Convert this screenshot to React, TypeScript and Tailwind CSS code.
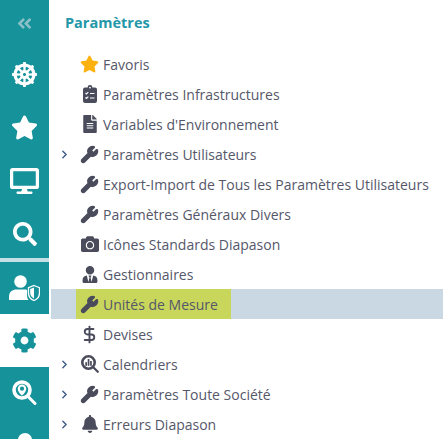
import type { ReactNode } from "react";
import {
  FaAngleDoubleLeft,
  FaBell,
  FaCamera,
  FaCog,
  FaDesktop,
  FaDharmachakra,
  FaFileAlt,
  FaSearch,
  FaStar,
  FaUserTie,
} from "react-icons/fa";
import { ChevronRight, DollarSign, Wrench } from "lucide-react";

// glass with small bars inside, no exact match in the pack
function SearchChart({ className }: { className?: string }) {
  return (
    <svg viewBox="0 0 18 18" className={className} fill="currentColor">
      <circle cx="7.5" cy="7.5" r="6.2" fill="none" stroke="currentColor" strokeWidth="2.6" />
      <rect x="4.3" y="7.2" width="1.7" height="3.6" />
      <rect x="6.7" y="4" width="1.7" height="6.8" />
      <rect x="9.1" y="6" width="1.7" height="4.8" />
      <path d="M12 12l4.8 4.8" stroke="currentColor" strokeWidth="2.2" strokeLinecap="round" />
    </svg>
  );
}

function ClipboardChecks({ className }: { className?: string }) {
  return (
    <svg viewBox="0 0 14 18" className={className} fill="currentColor">
      <path d="M2 2.5h2.6a2.4 2.4 0 0 1 4.8 0H12a2 2 0 0 1 2 2V16a2 2 0 0 1-2 2H2a2 2 0 0 1-2-2V4.500a2 2 0 0 1 2-2z" />
      <circle cx="7" cy="2.600" r="0.9" fill="#fff" />
      <path d="M2.500 8l1 1 1.800-1.800M2.500 12.500l1 1 1.800-1.800M7 8.500h4.500M7 13h4.500" fill="none" stroke="#fff" strokeWidth="1.100" />
    </svg>
  );
}

function LocationGlass({ className }: { className?: string }) {
  return (
    <svg viewBox="0 0 25 26" className={className}>
      <circle cx="10" cy="10" r="8" fill="none" stroke="#fff" strokeWidth="3.600" />
      <path d="M10 4.500a4.300 4.300 0 0 1 4.300 4.300c0 2.600-3 5.700-4.300 6.900-1.300-1.200-4.300-4.300-4.300-6.900A4.300 4.300 0 0 1 10 4.500z" fill="#fff" />
      <path d="M10 6.600a2.100 2.100 0 1 0 0 4.200 2.100 2.100 0 0 0 0-4.200z" fill="#16929b" />
      <path d="M16 16.500l7 7" stroke="#fff" strokeWidth="3" strokeLinecap="round" />
    </svg>
  );
}

function UserWithShield({ className }: { className?: string }) {
  return (
    <svg viewBox="0 0 31 26" className={className} fill="#fff">
      <circle cx="11.500" cy="6.500" r="6.300" />
      <path d="M0 25v-3.500C0 17 3.500 14.500 7.500 14.500h8c1 0 1.800.1 2.600.4V21c0 1.500.5 2.900 1.400 4z" />
      <path
        d="M25 10.500l5.500 2.200V18c0 3.500-2.400 6.300-5.500 7.500-3.100-1.200-5.500-4-5.500-7.500v-5.300z"
        fill="#16929b"
        stroke="#fff"
        strokeWidth="1.300"
      />
      <path d="M25 12.500v11c-2.200-1-3.800-3-3.800-5.500v-3.900z" fill="#fff" />
    </svg>
  );
}

type Row = {
  label: string;
  icon: ReactNode;
  arrow?: boolean;
  selected?: boolean;
};

const wrench = <Wrench className="h-[19px] w-[19px] fill-current" strokeWidth={2} />;

const ROWS: Row[] = [
  { label: "Favoris", icon: <FaStar className="h-[18px] w-[19px] text-[#fdb10f]" /> },
  { label: "Paramètres Infrastructures", icon: <ClipboardChecks className="h-[18px] w-[14px]" /> },
  { label: "Variables d'Environnement", icon: <FaFileAlt className="h-[18px] w-[14px]" /> },
  { label: "Paramètres Utilisateurs", icon: wrench, arrow: true },
  { label: "Export-Import de Tous les Paramètres Utilisateurs", icon: wrench },
  { label: "Paramètres Généraux Divers", icon: wrench },
  { label: "Icônes Standards Diapason", icon: <FaCamera className="h-[18px] w-[18px]" /> },
  { label: "Gestionnaires", icon: <FaUserTie className="h-[17px] w-[16px]" /> },
  { label: "Unités de Mesure", icon: wrench, selected: true },
  { label: "Devises", icon: <DollarSign className="h-[19px] w-[19px]" strokeWidth={2.4} /> },
  { label: "Calendriers", icon: <SearchChart className="h-[18px] w-[18px]" />, arrow: true },
  { label: "Paramètres Toute Société", icon: wrench, arrow: true },
  { label: "Erreurs Diapason", icon: <FaBell className="h-[18px] w-[16px]" />, arrow: true },
];

function RowItem({ row }: { row: Row }) {
  return (
    <div className={`flex h-[30px] shrink-0 items-center ${row.selected ? "bg-[#c9d8e3]" : ""}`}>
      <span className="flex w-[25px] shrink-0 justify-end pr-[5px] text-[#3f5a86]">
        {row.arrow && <ChevronRight className="h-[13px] w-[13px]" strokeWidth={2.6} />}
      </span>
      <span className={`flex h-[30px] items-center pr-[13px] ${row.selected ? "bg-[#c8d65b]" : ""}`}>
        <span className="flex w-[27px] shrink-0 justify-center text-[#4a4c5c]">{row.icon}</span>
        <span className="whitespace-nowrap pt-px text-[14px] text-[#55576a]">{row.label}</span>
      </span>
    </div>
  );
}

export default function App() {
  return (
    <div className="flex h-[439px] w-[443px] overflow-hidden bg-white font-['Open_Sans',sans-serif]">
      <aside className="flex w-[49px] shrink-0 flex-col">
        <div className="flex h-[258px] shrink-0 flex-col items-center bg-[#16929b] text-white">
          <FaAngleDoubleLeft className="mt-[15px] h-[17px] w-[15px] shrink-0 text-[#8cc0c8]" />
          <FaDharmachakra className="mt-[30px] h-[25px] w-[25px] shrink-0" />
          <FaStar className="mt-[28px] h-[25px] w-[27px] shrink-0" />
          <FaDesktop className="mt-[28px] h-[26px] w-[29px] shrink-0" />
          <FaSearch className="mt-[28px] h-[24px] w-[24px] shrink-0" />
        </div>
        <div className="h-[4px] shrink-0 bg-[#c4e0e4]" />
        <div className="flex h-[52px] shrink-0 items-center justify-center bg-[#16929b]">
          <UserWithShield className="h-[26px] w-[31px]" />
        </div>
        <div className="flex h-[53px] shrink-0 items-center justify-center text-[#16929b]">
          <FaCog className="h-[25px] w-[25px]" />
        </div>
        <div className="flex min-h-0 flex-1 flex-col items-center overflow-hidden bg-[#16929b]">
          <LocationGlass className="mt-[13px] h-[26px] w-[25px] shrink-0" />
          <span className="mt-[27px] h-[14px] w-[14px] shrink-0 rounded-full bg-white" />
        </div>
      </aside>
      <main className="min-w-0 flex-1 pl-[2px]">
        <h1 className="flex h-[49px] items-start pl-[14px] pt-[13px] text-[14.5px] font-bold leading-[20px] text-[#2497a8]">
          Paramètres
        </h1>
        <div className="flex flex-col">
          {ROWS.map((row) => (
            <RowItem key={row.label} row={row} />
          ))}
        </div>
      </main>
    </div>
  );
}
